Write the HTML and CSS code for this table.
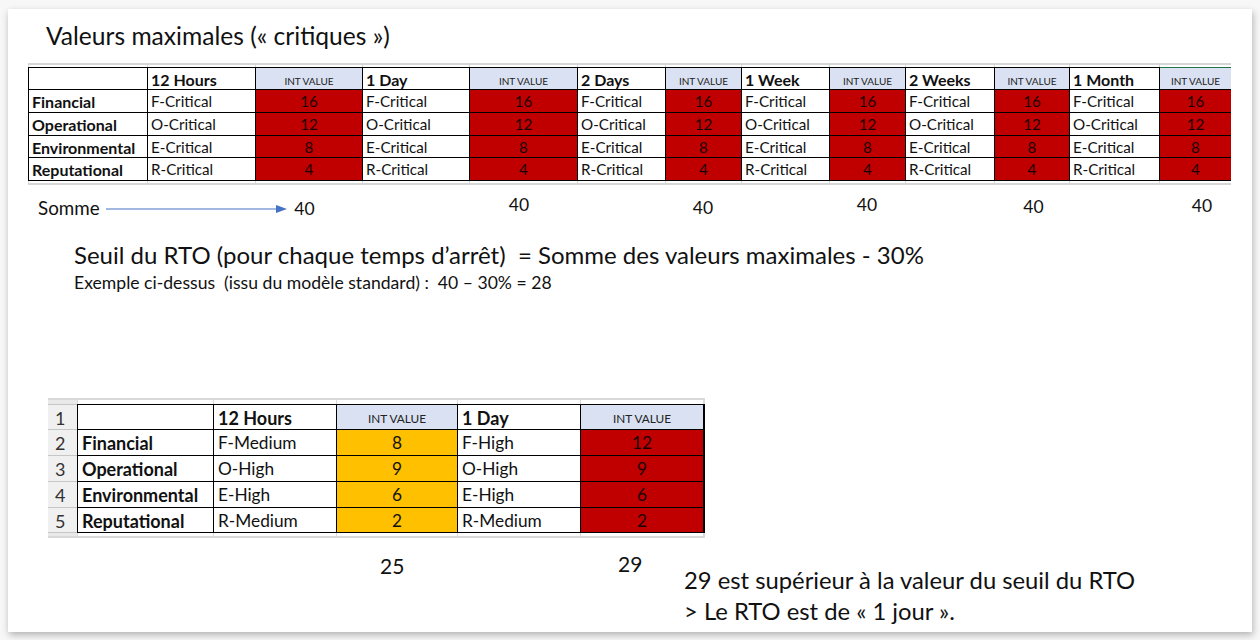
FILE: index.html
```html
<!DOCTYPE html>
<html lang="fr">
<head>
<meta charset="utf-8">
<title>Valeurs maximales</title>
<link rel="stylesheet" href="styles.css">
</head>
<body>
<div class="slide">
  <h1 class="title">Valeurs maximales (« critiques »)</h1>

  <div class="sheet sheet-top">
    <div class="strip strip-top">
      <span></span><span></span><span></span><span></span><span></span><span></span><span></span><span></span><span></span><span></span><span></span><span></span><span></span>
    </div>
    <div class="grid">
      <div class="c"></div>
      <div class="c h">12 Hours</div>
      <div class="c iv">INT VALUE</div>
      <div class="c h">1 Day</div>
      <div class="c iv">INT VALUE</div>
      <div class="c h">2 Days</div>
      <div class="c iv">INT VALUE</div>
      <div class="c h">1 Week</div>
      <div class="c iv">INT VALUE</div>
      <div class="c h">2 Weeks</div>
      <div class="c iv">INT VALUE</div>
      <div class="c h">1 Month</div>
      <div class="c iv sel">INT VALUE</div>

      <div class="c b">Financial</div>
      <div class="c">F-Critical</div><div class="c red">16</div>
      <div class="c">F-Critical</div><div class="c red">16</div>
      <div class="c">F-Critical</div><div class="c red">16</div>
      <div class="c">F-Critical</div><div class="c red">16</div>
      <div class="c">F-Critical</div><div class="c red">16</div>
      <div class="c">F-Critical</div><div class="c red">16</div>

      <div class="c b">Operational</div>
      <div class="c">O-Critical</div><div class="c red">12</div>
      <div class="c">O-Critical</div><div class="c red">12</div>
      <div class="c">O-Critical</div><div class="c red">12</div>
      <div class="c">O-Critical</div><div class="c red">12</div>
      <div class="c">O-Critical</div><div class="c red">12</div>
      <div class="c">O-Critical</div><div class="c red">12</div>

      <div class="c b">Environmental</div>
      <div class="c">E-Critical</div><div class="c red">8</div>
      <div class="c">E-Critical</div><div class="c red">8</div>
      <div class="c">E-Critical</div><div class="c red">8</div>
      <div class="c">E-Critical</div><div class="c red">8</div>
      <div class="c">E-Critical</div><div class="c red">8</div>
      <div class="c">E-Critical</div><div class="c red">8</div>

      <div class="c b">Reputational</div>
      <div class="c">R-Critical</div><div class="c red">4</div>
      <div class="c">R-Critical</div><div class="c red">4</div>
      <div class="c">R-Critical</div><div class="c red">4</div>
      <div class="c">R-Critical</div><div class="c red">4</div>
      <div class="c">R-Critical</div><div class="c red">4</div>
      <div class="c">R-Critical</div><div class="c red">4</div>
    </div>
    <div class="strip strip-bottom">
      <span></span><span></span><span></span><span></span><span></span><span></span><span></span><span></span><span></span><span></span><span></span><span></span><span></span>
    </div>
  </div>

  <div class="sums">
    <div class="somme">
      <span>Somme</span>
      <svg class="arrow" width="182" height="10" viewBox="0 0 182 10">
        <line x1="0" y1="5" x2="172" y2="5" stroke="#4472C4" stroke-width="1.2"/>
        <polygon points="170,1 181,5 170,9" fill="#4472C4"/>
      </svg>
    </div>
    <span class="sum s1">40</span><span></span>
    <span class="sum s2">40</span><span></span>
    <span class="sum s3">40</span><span></span>
    <span class="sum s4">40</span><span></span>
    <span class="sum s5">40</span><span></span>
    <span class="sum s6">40</span>
  </div>

  <p class="seuil">Seuil du RTO (pour chaque temps d’arrêt)&nbsp; = Somme des valeurs maximales - 30%</p>
  <p class="exemple">Exemple ci-dessus&nbsp; (issu du modèle standard) :&nbsp; 40 – 30% = 28</p>

  <div class="sheet sheet-bottom">
    <div class="strip2 strip2-top">
      <span class="rn"></span><span></span><span></span><span></span><span></span><span></span>
    </div>
    <div class="grid2">
      <div class="n">1</div>
      <div class="d"></div>
      <div class="d h">12 Hours</div>
      <div class="d iv">INT VALUE</div>
      <div class="d h">1 Day</div>
      <div class="d iv">INT VALUE</div>

      <div class="n">2</div>
      <div class="d b">Financial</div>
      <div class="d">F-Medium</div>
      <div class="d orange">8</div>
      <div class="d">F-High</div>
      <div class="d red">12</div>

      <div class="n">3</div>
      <div class="d b">Operational</div>
      <div class="d">O-High</div>
      <div class="d orange">9</div>
      <div class="d">O-High</div>
      <div class="d red">9</div>

      <div class="n">4</div>
      <div class="d b">Environmental</div>
      <div class="d">E-High</div>
      <div class="d orange">6</div>
      <div class="d">E-High</div>
      <div class="d red">6</div>

      <div class="n">5</div>
      <div class="d b">Reputational</div>
      <div class="d">R-Medium</div>
      <div class="d orange">2</div>
      <div class="d">R-Medium</div>
      <div class="d red">2</div>
    </div>
    <div class="strip2 strip2-bottom">
      <span class="rn"></span><span></span><span></span><span></span><span></span><span></span>
    </div>
  </div>

  <div class="result">
    <span class="tot t25">25</span>
    <span class="tot t29">29</span>
    <p class="concl">29 est supérieur à la valeur du seuil du RTO<br>&gt; Le RTO est de « 1 jour ».</p>
  </div>
</div>
</body>
</html>
```

FILE: styles.css
```css
* { box-sizing: border-box; }

html, body {
  margin: 0;
  padding: 0;
  background: #f7f7f7;
}

body {
  font-family: Lato, "Open Sans", "Noto Sans", sans-serif;
  color: #111;
  width: 1260px;
  height: 640px;
  overflow: hidden;
}

.slide {
  margin: 9px 0 0 8px;
  width: 1244px;
  height: 623px;
  background: #fff;
  box-shadow: 1px 3px 7px rgba(0, 0, 0, 0.28);
  overflow: hidden;
}

.title {
  margin: 13px 0 0 38px;
  font-size: 24.6px;
  line-height: 28px;
  font-weight: 400;
  color: #111;
}

/* ---------- top sheet ---------- */
.sheet-top {
  margin: 13px 0 0 20px;
  --cols: 118px 107px 106px 106px 107px 87px 75px 87px 75px 88px 74px 89px 71px;
}

.strip {
  display: grid;
  grid-template-columns: var(--cols);
  column-gap: 1px;
  padding-left: 1px;
  background: #d6d6d6;
  height: 4px;
  width: max-content;
}
.strip span { background: #fff; }
.strip-top { padding-top: 2px; }
.strip-bottom { padding-bottom: 2px; }

.grid {
  display: grid;
  grid-template-columns: var(--cols);
  grid-template-rows: 21px 22px 22px 21px 22px;
  gap: 1px;
  padding: 1px 0 1px 1px;
  background: #000;
  width: max-content;
}

.c {
  background: #fff;
  font-size: 15.2px;
  line-height: 17px;
  padding: 3px 3px 0;
  white-space: nowrap;
  overflow: hidden;
}
.c.h, .c.b { font-weight: 700; font-size: 16px; }
.c.iv {
  background: #d9e1f2;
  font-size: 10px;
  font-weight: 400;
  text-align: center;
  padding-top: 7px;
  line-height: 12px;
  color: #222;
}
.c.sel { box-shadow: 0 -1px 0 #217346; overflow: visible; }
.c.red {
  background: #c00000;
  text-align: center;
  color: #1a0000;
}

/* ---------- sums row ---------- */
.sums {
  margin: 12px 0 0 20px;
  display: grid;
  grid-template-columns: 227px 107px 107px 108px 88px 76px 88px 76px 89px 75px 90px 72px;
  height: 20px;
  font-size: 17.5px;
  line-height: 20px;
}
.somme {
  display: flex;
  align-items: center;
  padding-left: 10px;
  gap: 6px;
  font-size: 18.8px;
}
.arrow { flex: none; margin-top: 1px; }
.sum { text-align: center; }
.s1 { margin-top: 2px; padding-right: 8px; }
.s2 { margin-top: -2px; padding-right: 8px; }
.s3 { margin-top: 1px; }
.s4 { margin-top: -2px; }
.s5 { margin-top: 0; padding-left: 4px; }
.s6 { margin-top: -1px; padding-left: 14px; }

/* ---------- formula text ---------- */
.seuil {
  margin: 24px 0 0 66px;
  font-size: 24px;
  line-height: 28px;
}
.exemple {
  margin: 4px 0 0 66px;
  font-size: 17.6px;
  line-height: 20px;
}

/* ---------- bottom sheet ---------- */
.sheet-bottom {
  margin: 105px 0 0 40px;
  width: 657px;
  --cols2: 29px 135px 122px 120px 122px 122px;
}
.strip2 {
  display: grid;
  grid-template-columns: var(--cols2);
  column-gap: 1px;
  padding-right: 1px;
  background: #d9d9d9;
  height: 6px;
}
.strip2 span { background: #fff; }
.strip2 span.rn { background: #e9e9e9; }
.strip2-top { padding-top: 2px; }
.strip2-bottom { padding-bottom: 2px; height: 5px; }

.grid2 {
  display: grid;
  grid-template-columns: var(--cols2);
  grid-template-rows: 24px 25px 25px 25px 24px;
  gap: 1px;
  padding: 1px 1px 1px 0;
  background: #000;
}
.n {
  background: #f0f0f0;
  color: #333;
  font-size: 18px;
  line-height: 20px;
  padding: 3px 0 0 7px;
  box-shadow: 0 1px 0 #c6c6c6, 0 -1px 0 #c6c6c6;
}
.d {
  background: #fff;
  font-size: 17.3px;
  line-height: 20px;
  padding: 3px 4px 0;
  white-space: nowrap;
}
.d.h, .d.b { font-weight: 700; font-size: 18px; }
.d.iv {
  background: #d9e1f2;
  font-size: 11.8px;
  text-align: center;
  padding-top: 7px;
  line-height: 14px;
  color: #222;
}
.d.orange { background: #ffc000; text-align: center; }
.d.red { background: #c00000; text-align: center; color: #1a0000; }

/* ---------- result ---------- */
.result {
  margin: 16px 0 0 372px;
  display: flex;
  align-items: flex-start;
}
.tot {
  flex: none;
  font-size: 21px;
  line-height: 24px;
}
.t25 { width: 238px; }
.t29 { width: 66px; margin-top: -2px; }
.concl {
  margin: 11px 0 0 0;
  font-size: 23.8px;
  line-height: 31px;
}
```
